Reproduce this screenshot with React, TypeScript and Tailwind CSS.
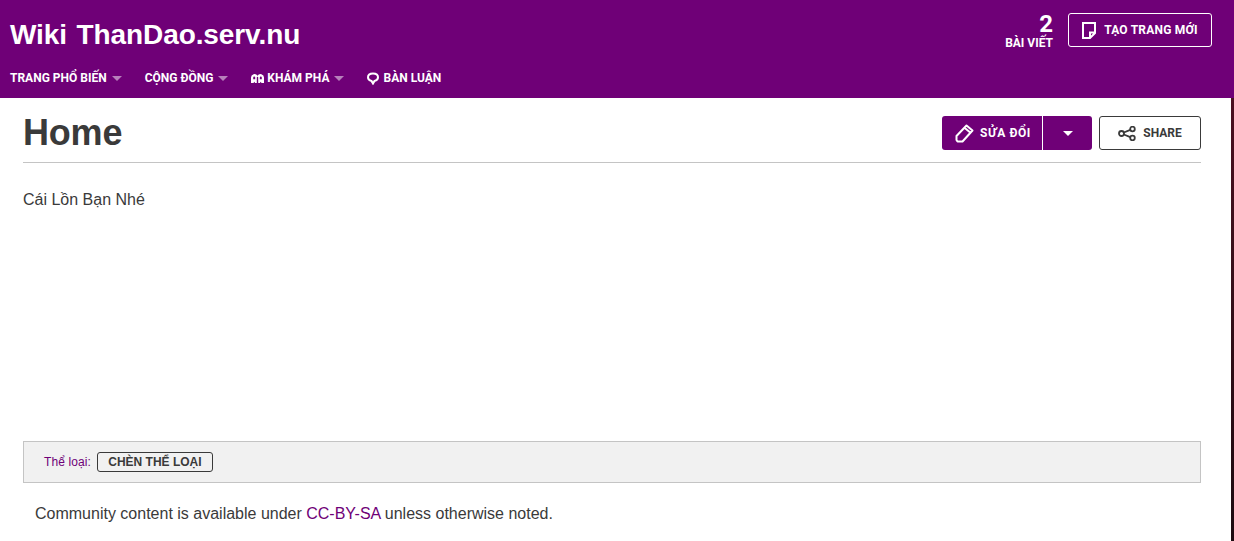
const Caret = () => (
  <span className="inline-block border-x-[5px] border-t-[5px] border-x-transparent border-t-white/50 ml-[5px] mt-[1px]" />
);

const NavItem = ({ label, icon, caret = true }: { label: string; icon?: React.ReactNode; caret?: boolean }) => (
  <div className="flex items-center font-['Roboto',sans-serif] text-[12px] font-bold text-white">
    {icon}
    <span>{label}</span>
    {caret && <Caret />}
  </div>
);

const App = () => {
  return (
    <div className="h-[541px] w-[1234px] overflow-hidden bg-white font-['Liberation_Sans',sans-serif] text-[#3a3a3a]">
      {/* Header */}
      <header className="h-[98px] bg-[#6f0077] flex justify-between px-[10px] text-white">
        <div>
          <h1 className="text-[28px] leading-[32px] font-bold mt-[19px] tracking-[-0.1px] [word-spacing:2px]">Wiki ThanDao.serv.nu</h1>
          <nav className="flex items-center gap-[23px] mt-[19px] h-[16px]">
            <NavItem label="TRANG PHỔ BIẾN" />
            <NavItem label="CỘNG ĐỒNG" />
            <NavItem
              label="KHÁM PHÁ"
              icon={
                <svg width="13" height="10" viewBox="0 0 13 10" className="mr-[3px]" fill="white">
                  <path fillRule="evenodd" d="M0 10V4.500A3.500 3.500 0 0 1 6.500 2.700 3.500 3.500 0 0 1 13 4.500V10h-2.500l-.8-1.200-.8 1.200H7.200V4.500a.7.700 0 0 0-1.400 0V10H4.100l-.8-1.200-.8 1.200zM2.200 4.500v1.700h2V4.500a1 1 0 0 0-2 0zM8.800 4.500v1.700h2V4.500a1 1 0 0 0-2 0z" />
                </svg>
              }
            />
            <NavItem
              label="BÀN LUẬN"
              caret={false}
              icon={
                <svg width="12" height="13" viewBox="0 0 12 13" className="mr-[4px]" fill="none" stroke="white" strokeWidth="2">
                  <path d="M4.500 9C2.300 8.500 1 7 1 5.200 1 2.900 3.200 1.500 6 1.500s5 1.400 5 3.700C11 7 9.700 8.500 7.500 9L6 11.500z" />
                </svg>
              }
            />
          </nav>
        </div>
        <div className="flex items-start mt-[13px] mr-[12px] font-['Roboto',sans-serif]">
          <div className="flex flex-col items-end mr-[15px] mt-[-1px]">
            <span className="text-[24px] leading-[24px] font-bold">2</span>
            <span className="text-[12px] leading-[14px] font-bold">BÀI VIẾT</span>
          </div>
          <button className="h-[34px] w-[144px] rounded-[3px] border border-white flex items-center justify-center text-[12px] font-bold tracking-[0.2px]">
            <svg width="14" height="17" viewBox="0 0 14 17" className="mr-[8px]" fill="none" stroke="white" strokeWidth="2">
              <path d="M1 1h12v10l-5 5H1zM13 10.500H8V16" />
            </svg>
            TẠO TRANG MỚI
          </button>
        </div>
      </header>

      {/* Page */}
      <div className="relative h-[443px]">
        <div className="absolute right-0 top-0 h-full w-[3px] bg-gradient-to-b from-[#4a1020] to-[#1c0a10]" />
        <main className="ml-[23px] w-[1178px]">
          <div className="flex items-end justify-between h-[65px] border-b border-[#c4c4c4]">
            <h2 className="text-[36px] leading-[40px] font-bold mb-[9px] tracking-[-0.2px] text-[#3a3a3a]">Home</h2>
            <div className="flex gap-[7px] mb-[12px] font-['Roboto',sans-serif]">
              <div className="flex h-[34px] w-[150px] rounded-[3px] bg-[#6f0077] text-white text-[12px] font-bold tracking-[0.6px]">
                <div className="flex items-center flex-1 pl-[13px] border-r border-white">
                  <svg width="19" height="19" viewBox="0 0 19 19" className="mr-[6px]" fill="none" stroke="white" strokeWidth="2" strokeLinejoin="round">
                    <path d="M1.500 12 11.500 1.500 17.500 6.500 7.500 17.500H2.500L1.500 16zM9.500 3.800l6 5" />
                  </svg>
                  SỬA ĐỔI
                </div>
                <div className="flex w-[49px] items-center justify-center">
                  <span className="border-x-[5px] border-t-[5px] border-x-transparent border-t-white" />
                </div>
              </div>
              <button className="flex h-[34px] w-[102px] items-center justify-center rounded-[3px] border border-[#3a3a3a] bg-white text-[12px] font-bold text-[#3a3a3a]">
                <svg width="18" height="15" viewBox="0 0 18 15" className="mr-[7px]" fill="none" stroke="#3a3a3a" strokeWidth="1.800">
                  <circle cx="3.500" cy="7.500" r="2.500" />
                  <circle cx="14.500" cy="3" r="2.300" />
                  <circle cx="14.500" cy="12" r="2.300" />
                  <path d="M5.800 6.500 12.300 3.800M5.800 8.500 12.300 11.200" />
                </svg>
                SHARE
              </button>
            </div>
          </div>
          <p className="mt-[27px] text-[16px] leading-[20px]">Cái Lồn Bạn Nhé</p>

          <div className="mt-[231px] flex h-[42px] items-center border border-[#c4c4c4] bg-[#f1f1f1] pl-[20px] text-[12px]">
            <span className="text-[#6f0077] tracking-[0.1px]">Thể loại:</span>
            <button className="ml-[6px] h-[20px] w-[116px] rounded-[3px] border border-[#3a3a3a] text-[12px] font-bold leading-[18px]">
              CHÈN THỂ LOẠI
            </button>
          </div>
          <p className="mt-[21px] ml-[12px] text-[16px] leading-[20px]">
            Community content is available under <span className="text-[#6f0077]">CC-BY-SA</span> unless otherwise noted.
          </p>
        </main>
      </div>
    </div>
  );
};

export default App;
